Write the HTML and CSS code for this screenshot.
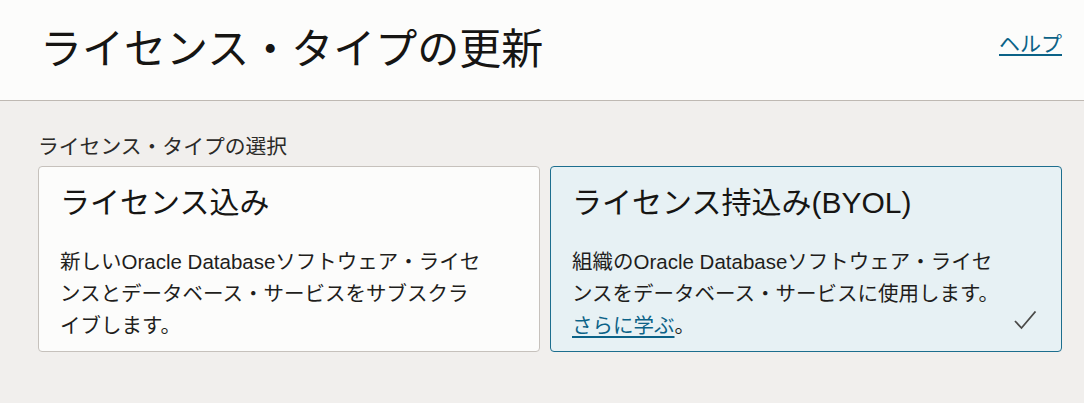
FILE: index.html
```html
<!DOCTYPE html>
<html lang="ja">
<head>
<meta charset="utf-8">
<title>ライセンス・タイプの更新</title>
<link rel="stylesheet" href="styles.css">
</head>
<body>
<header class="page-header">
  <h1 class="page-title">ライセンス・タイプの更新</h1>
  <a class="help-link" href="#">ヘルプ</a>
</header>
<main class="content">
  <div class="field-label">ライセンス・タイプの選択</div>
  <div class="choices">
    <div class="card">
      <div class="card-title">ライセンス込み</div>
      <p class="card-desc">新しいOracle Databaseソフトウェア・ライセンスとデータベース・サービスをサブスクライブします。</p>
    </div>
    <div class="card card-selected">
      <div class="card-title">ライセンス持込み(BYOL)</div>
      <p class="card-desc">組織のOracle Databaseソフトウェア・ライセンスをデータベース・サービスに使用します。<a class="link" href="#">さらに学ぶ</a>。</p>
      <svg class="check" width="24" height="20" viewBox="0 0 24 20" aria-hidden="true">
        <path d="M1 10 L7.5 17 L21.5 0.5" fill="none" stroke="#4a4a48" stroke-width="1.8"/>
      </svg>
    </div>
  </div>
</main>
</body>
</html>
```
FILE: styles.css
```css
* { box-sizing: border-box; }
html, body { margin: 0; padding: 0; }
body {
  font-family: "Liberation Sans", "Noto Sans CJK JP", sans-serif;
  color: #161513;
  background: #f1efed;
  width: 1084px;
  height: 403px;
  overflow: hidden;
}
.page-header {
  height: 101px;
  background: #fcfcfb;
  border-bottom: 1px solid #bfb9b3;
  display: flex;
  justify-content: space-between;
  align-items: flex-start;
  padding: 24px 22px 0 40px;
}
.page-title {
  margin: 0;
  font-size: 42px;
  font-weight: normal;
  line-height: 52px;
  letter-spacing: 0;
}
.help-link {
  margin-top: 8px;
  font-size: 21px;
  line-height: 24px;
  color: #0b6287;
  text-decoration: underline;
  text-decoration-thickness: 2px;
  text-underline-offset: 3px;
}
.content {
  padding: 34px 22px 0 38px;
}
.field-label {
  font-size: 20.8px;
  line-height: 24px;
  color: #2b2a28;
}
.choices {
  margin-top: 7px;
  display: grid;
  grid-template-columns: 502px 512px;
  column-gap: 10px;
}
.card {
  position: relative;
  height: 186px;
  background: #fcfcfb;
  border: 1px solid #c6c1bc;
  border-radius: 4px;
  padding: 18px 54px 0 21px;
}
.card-selected {
  background: #e7f1f4;
  border-color: #1d6e8e;
}
.card-title {
  font-size: 30px;
  line-height: 36px;
}
.card-desc {
  margin: 25px 0 0;
  font-size: 20.5px;
  line-height: 32px;
  color: #1f1e1c;
}
.link {
  color: #0b6287;
  text-decoration: underline;
  text-decoration-thickness: 2px;
  text-underline-offset: 3px;
}
.check {
  position: absolute;
  right: 23px;
  bottom: 20px;
}
```
